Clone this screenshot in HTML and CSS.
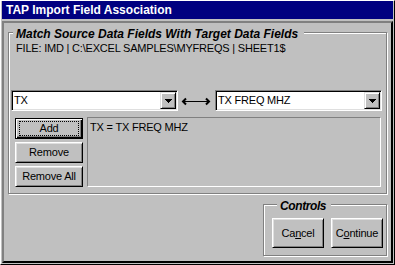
FILE: index.html
```html
<!DOCTYPE html>
<html lang="en">
<head>
    <meta charset="UTF-8">
    <title>TAP Import Field Association</title>
    <link rel="stylesheet" href="styles.css">
</head>
<body>
    <div class="window">
        <div class="title-bar">TAP Import Field Association</div>

        <div class="client">
            <fieldset class="group group-match">
                <legend>Match Source Data Fields With Target Data Fields</legend>
                <div class="file-line">FILE: IMD | C:\EXCEL SAMPLES\MYFREQS | SHEET1$</div>

                <div class="combo-row">
                    <div class="combo">
                        <span class="combo-text">TX</span>
                        <span class="combo-btn">
                            <svg width="7" height="4" viewBox="0 0 7 4"><path d="M0 0h7v1H0zM1 1h5v1H1zM2 2h3v1H2zM3 3h1v1H3z" fill="#000"/></svg>
                        </span>
                    </div>
                    <svg class="link-arrow" width="30" height="21" viewBox="0 0 30 21">
                        <path d="M5 8.5L2 11.5L5 14.5" fill="none" stroke="#000" stroke-width="2"/>
                        <path d="M25 8.5L28 11.5L25 14.5" fill="none" stroke="#000" stroke-width="2"/>
                        <path d="M3 11.5H27" stroke="#000" stroke-width="1"/>
                    </svg>
                    <div class="combo">
                        <span class="combo-text">TX FREQ MHZ</span>
                        <span class="combo-btn">
                            <svg width="7" height="4" viewBox="0 0 7 4"><path d="M0 0h7v1H0zM1 1h5v1H1zM2 2h3v1H2zM3 3h1v1H3z" fill="#000"/></svg>
                        </span>
                    </div>
                </div>

                <div class="assoc-row">
                    <div class="btn-stack">
                        <button class="btn btn-default"><span class="focus-ring">Add</span></button>
                        <button class="btn">Remove</button>
                        <button class="btn">Remove All</button>
                    </div>
                    <div class="assoc-list">TX = TX FREQ MHZ</div>
                </div>
            </fieldset>

            <fieldset class="group group-controls">
                <legend>Controls</legend>
                <div class="control-btns">
                    <button class="btn btn-lg">Ca<u>n</u>cel</button>
                    <button class="btn btn-lg">C<u>o</u>ntinue</button>
                </div>
            </fieldset>
        </div>
    </div>
</body>
</html>
```

FILE: styles.css
```css
* {
    box-sizing: border-box;
}

body {
    margin: 0;
    background-color: #c0c0c0;
    font-family: "Liberation Sans", Arial, sans-serif;
    font-size: 11px;
    letter-spacing: -0.2px;
    color: #000;
}

.window {
    width: 395px;
    height: 265px;
    border: 1px solid;
    border-color: #fff #000 #000 #fff;
    padding: 0 1px 1px;
    display: flex;
    flex-direction: column;
}

.title-bar {
    height: 18px;
    padding: 1px 0 0 4px;
    background-color: #000080;
    color: #fff;
    font-size: 12px;
    font-weight: bold;
    line-height: 17px;
    letter-spacing: 0;
}

.client {
    flex: 1;
    margin-top: 2px;
    border: 2px solid;
    border-color: #808080 #000 #000 #808080;
}

/* etched frames */
.group {
    margin: 0;
    padding: 0;
    min-width: 0;
    border: 1px solid #808080;
    box-shadow: 1px 1px #fff, inset 1px 1px #fff;
}

.group legend {
    padding: 4px 3px 0;
    background-color: #c0c0c0;
    font-size: 12px;
    font-weight: bold;
    font-style: italic;
    line-height: 13px;
    letter-spacing: 0;
}

.group-match {
    width: 379px;
    margin: 1px 0 0 4px;
    padding-bottom: 6px;
}

.group-match legend {
    margin-left: 4px;
    padding-right: 6px;
}

.file-line {
    margin: 1px 0 0 7px;
    line-height: 13px;
}

.combo-row {
    display: flex;
    align-items: center;
    margin: 35px 0 0 2px;
}

.combo {
    width: 167px;
    height: 21px;
    padding: 1px;
    display: flex;
    align-items: center;
    background-color: #fff;
    border: 1px solid;
    border-color: #808080 #fff #fff #808080;
    box-shadow: inset 1px 1px #000, inset -1px -1px #dfdfdf;
}

.combo-text {
    flex: 1;
    padding-left: 1px;
    line-height: 13px;
}

.combo-btn {
    width: 16px;
    height: 17px;
    display: flex;
    align-items: center;
    justify-content: center;
    background-color: #c0c0c0;
    border: 1px solid;
    border-color: #dfdfdf #000 #000 #dfdfdf;
    box-shadow: inset 1px 1px #fff, inset -1px -1px #808080;
}

.combo-btn svg {
    display: block;
}

.link-arrow {
    display: block;
    margin: 0 4px 0 3px;
}

.assoc-row {
    display: flex;
    gap: 4px;
    margin: 6px 0 0 6px;
}

.btn-stack {
    width: 68px;
    padding-top: 1px;
    display: flex;
    flex-direction: column;
    gap: 3px;
}

.btn {
    width: 68px;
    height: 21px;
    padding: 0;
    font: inherit;
    letter-spacing: inherit;
    line-height: 13px;
    color: #000;
    background-color: #c0c0c0;
    border: 1px solid;
    border-color: #fff #000 #000 #fff;
    box-shadow: inset 1px 1px #dfdfdf, inset -1px -1px #808080;
}

.btn-default {
    padding: 2px 3px;
    border-color: #000;
    box-shadow: inset 1px 1px #fff, inset -1px -1px #000, inset -2px -2px #808080;
}

.focus-ring {
    display: block;
    height: 15px;
    border: 1px dotted #000;
}

.assoc-list {
    width: 294px;
    height: 70px;
    padding: 3px 2px;
    line-height: 13px;
    border: 1px solid;
    border-color: #808080 #fff #fff #808080;
}

.group-controls {
    width: 124px;
    margin: 2px 4px 0 auto;
    padding: 5px 0 7px 8px;
}

.group-controls legend {
    margin-left: 5px;
    padding-right: 5px;
    letter-spacing: -0.4px;
}

.control-btns {
    display: flex;
    gap: 7px;
}

.btn-lg {
    width: 52px;
    height: 30px;
}

.btn u {
    text-underline-offset: 1px;
}
```
